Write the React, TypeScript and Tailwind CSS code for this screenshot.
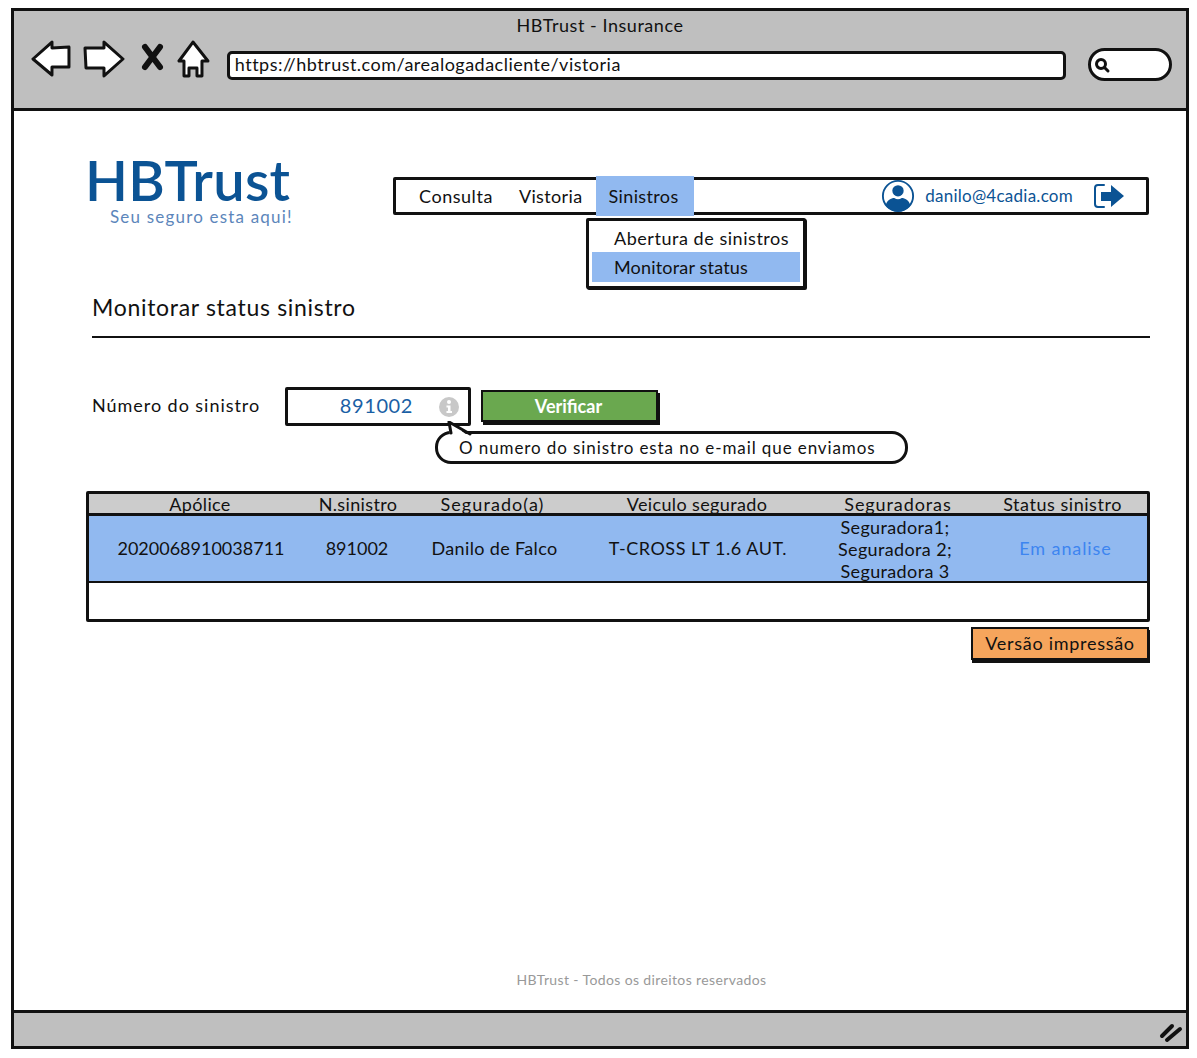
import React from "react";

const font = { fontFamily: '"Lato", "Noto Sans", sans-serif' };

function Back() {
  return (
    <svg width="42" height="38" viewBox="30 40 42 38" fill="#fff" stroke="#111" strokeWidth="3" strokeLinejoin="round">
      <path d="M33 59 L52 42 L52 48 L69 47 L69 67 L52 67 L52 75 Z" />
    </svg>
  );
}
function Forward() {
  return (
    <svg width="42" height="38" viewBox="83 40 42 38" fill="#fff" stroke="#111" strokeWidth="3" strokeLinejoin="round">
      <path d="M123 59 L104 42 L104 48 L85 48 L86 68 L104 68 L104 76 Z" />
    </svg>
  );
}
function Stop() {
  return (
    <svg className="mt-[2px]" width="24" height="30" viewBox="140 42 24 30" fill="none" stroke="#111" strokeWidth="6" strokeLinecap="round">
      <path d="M145 47 L160 67 M160 47 L145 67" />
    </svg>
  );
}
function Home() {
  return (
    <svg width="34" height="38" viewBox="176 40 34 38" fill="#fff" stroke="#111" strokeWidth="3" strokeLinejoin="round">
      <path d="M193 42 L179 61 L184 61 L184 76 L189 76 L189 68 L197 68 L197 76 L202 76 L202 61 L208 61 Z" />
    </svg>
  );
}
function Search() {
  return (
    <svg width="18" height="18" viewBox="0 0 18 18" fill="none" stroke="#111" strokeWidth="3" strokeLinecap="round">
      <circle cx="8" cy="8" r="4.5" />
      <path d="M11.5 11.5 L15 15" />
    </svg>
  );
}
function User() {
  return (
    <svg width="34" height="34" viewBox="0 0 36 36">
      <circle cx="18" cy="18" r="16" fill="#fff" stroke="#0b5394" strokeWidth="2" />
      <circle cx="18" cy="12.5" r="6" fill="#0b5394" />
      <path d="M5 28 C6 22 11 20 14 20 Q18 23 22 20 C25 20 30 22 31 28 A16 16 0 0 1 5 28 Z" fill="#0b5394" />
    </svg>
  );
}
function Logout() {
  return (
    <svg width="32" height="26" viewBox="0 0 32 26">
      <path d="M11 2 H5 Q2 2 2 5 V21 Q2 24 5 24 H11" fill="none" stroke="#0b5394" strokeWidth="2" strokeLinecap="round" />
      <path d="M8 9 H18 V2 L31 13 L18 24 V18 H8 Z" fill="#0b5394" />
    </svg>
  );
}
function Info() {
  return (
    <svg width="20" height="20" viewBox="0 0 20 20">
      <circle cx="10" cy="10" r="10" fill="#c8c8c8" />
      <circle cx="10" cy="5" r="2" fill="#fff" />
      <path d="M7.5 8.5 H11.5 V14 H13 V16 H7.5 V14 H9 V10.5 H7.5 Z" fill="#fff" />
    </svg>
  );
}
function Grip() {
  return (
    <svg width="24" height="20" viewBox="0 0 24 20" fill="none" stroke="#111" strokeWidth="4" strokeLinecap="round">
      <path d="M3 13 L13 3 M8 17 L21 6" />
    </svg>
  );
}

const cols = "grid grid-cols-[224px_90px_182px_226px_172px_165px]";

export default function App() {
  return (
    <div className="w-[1197px] h-[1058px] bg-white pl-[11px] pt-[8px] text-[#111]" style={font}>
      <div className="w-[1178px] h-[1041px] border-[3px] border-[#111] flex flex-col">
        <header className="h-[100px] shrink-0 bg-[#bfbfbf] border-b-[3px] border-[#111] flex flex-col items-center">
          <div className="h-[28px] mb-[1px] flex items-center text-[18px] tracking-[0.03em] leading-none">HBTrust - Insurance</div>
          <div className="w-full flex items-start h-[42px] pl-[16px] pr-[14px]">
            <Back />
            <div className="w-[11px]" />
            <Forward />
            <div className="w-[15px]" />
            <Stop />
            <div className="w-[12px]" />
            <Home />
            <div className="w-[17px]" />
            <div className="mt-[11px] w-[840px] h-[29px] bg-white border-[3px] border-[#111] rounded-[5px] flex items-center pl-[5px] pb-[4px] text-[18px] tracking-[0.027em] leading-none">
              https://hbtrust.com/arealogadacliente/vistoria
            </div>
            <div className="w-[22px]" />
            <div className="mt-[8px] w-[84px] h-[33px] bg-white border-[3px] border-[#111] rounded-full flex items-center pl-[2px]">
              <Search />
            </div>
          </div>
        </header>

        <main className="flex-1 pl-[73px] flex flex-col">
          <div className="flex items-start mt-[50px] h-[70px]">
            <div className="w-[306px] shrink-0 relative">
              <div className="text-[#0b5394] text-[56px] leading-[44px] font-semibold tracking-[0.005em] h-[44px] ml-[-2px] mt-[-3px]">HBTrust</div>
              <div className="text-[#5c86bb] text-[17px] leading-[20px] tracking-[0.07em] pl-[23px] mt-[5px]">Seu seguro esta aqui!</div>
            </div>
            <nav className="relative mt-[16px] w-[756px] h-[38px] border-[3px] border-[#111] rounded-[2px] flex items-center text-[18px] tracking-[0.02em]">
              <span className="ml-[23px] tracking-[0.03em]">Consulta</span>
              <span className="ml-[26px]">Vistoria</span>
              <span className="ml-[13px] w-[98px] h-[40px] bg-[#91b9f0] flex items-center pl-[13px]">Sinistros</span>
              <div className="ml-auto flex items-center text-[#0b5394] pr-[21px]">
                <User />
                <span className="ml-[10px] text-[17px] tracking-[0.015em]">danilo@4cadia.com</span>
                <span className="ml-[20px] flex"><Logout /></span>
              </div>
              <div className="absolute left-[190px] top-[38px] w-[220px] h-[71px] bg-white border-[3px] border-[#111] rounded-[2px] p-[3px] shadow-[1px_1px_0_#111]">
                <div className="h-[28px] flex items-center pl-[22px] tracking-[0.03em]">Abertura de sinistros</div>
                <div className="h-[30px] bg-[#91b9f0] flex items-center pl-[22px] tracking-[0.01em]">Monitorar status</div>
              </div>
            </nav>
          </div>

          <h1 className="mt-[61px] ml-[5px] text-[23px] leading-[30px] font-normal tracking-[0.03em]">Monitorar status sinistro</h1>
          <div className="ml-[5px] mt-[14px] w-[1058px] h-[2px] bg-[#111]" />

          <div className="flex items-start mt-[49px] ml-[5px] h-[104px]">
            <label className="w-[193px] shrink-0 h-[36px] flex items-center text-[18px] tracking-[0.053em]">Número do sinistro</label>
            <div className="relative w-[186px] h-[39px] border-[3px] border-[#111] rounded-[2px] flex items-center justify-end pr-[9px] shrink-0">
              <span className="text-[#1a5fa5] text-[20px] tracking-[0.03em] mr-[26px] mb-[4px]">891002</span>
              <Info />
            </div>
            <button className="ml-[10px] mt-[3px] w-[177px] h-[32px] bg-[#6aa84f] border-2 border-[#111] shadow-[2px_3px_0_#111] text-white text-[18px] font-bold pr-[2px]">Verificar</button>
            <div className="absolute left-[435px] top-[431px] w-[473px] h-[33px] bg-white border-[3px] border-[#111] rounded-[16px] flex items-center pl-[21px] pt-[1px] text-[17px] tracking-[0.053em]">
              <svg className="absolute left-[6px] top-[-13px]" width="30" height="18" viewBox="0 0 30 18">
                <path d="M5 1 L6 16 L26 16 Z" fill="#fff" />
                <path d="M5 1 L7 12 M5 1 L26 13" fill="none" stroke="#111" strokeWidth="3" strokeLinecap="round" />
              </svg>
              O numero do sinistro esta no e-mail que enviamos
            </div>
          </div>

          <div className="ml-[-1px] w-[1064px] h-[131px] border-[3px] border-[#111] rounded-[2px] text-[18px] tracking-[0.02em] text-center">
            <div className={`${cols} h-[22px] bg-[#cccccc] border-b-[3px] border-[#111] leading-[20px]`}>
              <div className="pr-[2px]">Apólice</div>
              <div>N.sinistro</div>
              <div className="tracking-[0.06em] pr-[3px]">Segurado(a)</div>
              <div className="pr-[2px]">Veiculo segurado</div>
              <div className="tracking-[0.05em] pl-[2px]">Seguradoras</div>
              <div className="tracking-[0.03em] pr-[6px]">Status sinistro</div>
            </div>
            <div className={`${cols} h-[67px] bg-[#91b9f0] border-b-[2px] border-[#111] items-center`}>
              <div className="tracking-[0] mt-[-1px]">2020068910038711</div>
              <div className="tracking-[0] mt-[-1px] pr-[2px]">891002</div>
              <div className="pl-[1px] mt-[-1px]">Danilo de Falco</div>
              <div className="tracking-[0.03em] mt-[-1px]">T-CROSS LT 1.6 AUT.</div>
              <div className="leading-[22px] pr-[4px]">Seguradora1;<br />Seguradora 2;<br />Seguradora 3</div>
              <div className="text-[#3d85f0] tracking-[0.05em] mt-[-1px]">Em analise</div>
            </div>
          </div>

          <div className="flex justify-end w-[1063px] ml-[-1px] mt-[5px]">
            <button className="w-[178px] h-[33px] bg-[#f6a55c] border-2 border-[#111] shadow-[1px_3px_0_#111] text-[18px] tracking-[0.04em]">Versão impressão</button>
          </div>

          <div className="mt-auto mb-[21px] ml-[-73px] text-center text-[#999] text-[14px] leading-[18px] tracking-[0.027em] pl-[83px] w-[1172px]">HBTrust - Todos os direitos reservados</div>
        </main>

        <footer className="h-[36px] shrink-0 bg-[#bfbfbf] border-t-[3px] border-[#111] flex items-start justify-end pr-[3px] pt-[10px]">
          <Grip />
        </footer>
      </div>
    </div>
  );
}
